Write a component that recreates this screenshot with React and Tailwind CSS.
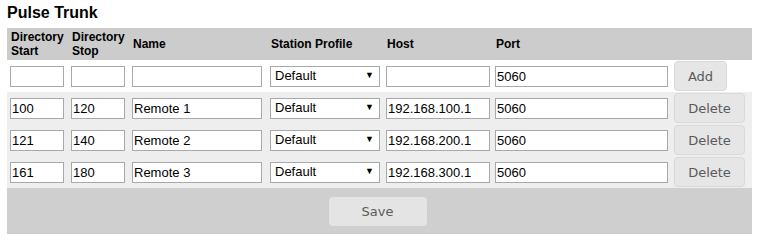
import React from "react";

const rows = [
  { start: "100", stop: "120", name: "Remote 1", host: "192.168.100.1", port: "5060" },
  { start: "121", stop: "140", name: "Remote 2", host: "192.168.200.1", port: "5060" },
  { start: "161", stop: "180", name: "Remote 3", host: "192.168.300.1", port: "5060" },
];

const cols = "grid grid-cols-[61px_61px_138px_116px_109px_179px_1fr] items-center pl-[3px]";

function Field({ value, w }) {
  return (
    <div
      className={`${w} h-[21px] border border-[#a9a9a9] bg-white pl-[1px] text-[13px] leading-[19px] text-black`}
    >
      {value}
    </div>
  );
}

function Select() {
  return (
    <div className="w-[110px] h-[21px] border border-[#a9a9a9] bg-white pl-[4px] pr-[5px] flex items-center justify-between text-[13px] text-black">
      <span>Default</span>
      <span className="text-[9px]">▼</span>
    </div>
  );
}

function Btn({ label, w }) {
  return (
    <button
      className={`${w} h-[30px] pt-[2px] rounded-[4px] border border-[#d9d9d9] bg-[#e6e6e6] text-[#5a5a5a] text-[13px] font-['DejaVu_Sans',Verdana,sans-serif]`}
    >
      {label}
    </button>
  );
}

export default function App() {
  return (
    <div className="w-[763px] h-[242px] bg-white font-['Liberation_Sans',Arial,sans-serif] pt-[3px] pl-[7px]">
      <h1 className="text-[16px] leading-[19px] font-bold text-black">Pulse Trunk</h1>
      <div className="w-[745px] mt-[6px]">
        {/* Header */}
        <div className={`${cols} h-[32px] bg-[#cccccc] text-[12px] font-bold leading-[14px] text-black`}>
          <div className="pl-[1px]">Directory<br />Start</div>
          <div className="pl-[1px]">Directory<br />Stop</div>
          <div className="pl-[1px]">Name</div>
          <div className="pl-[1px]">Station Profile</div>
          <div className="pl-[1px]">Host</div>
          <div className="pl-[1px]">Port</div>
          <div></div>
        </div>

        {/* Add row */}
        <div className={`${cols} h-[32px] bg-white`}>
          <Field value="" w="w-[54px]" />
          <Field value="" w="w-[54px]" />
          <Field value="" w="w-[130px]" />
          <Select />
          <Field value="" w="w-[104px]" />
          <Field value="5060" w="w-[173px]" />
          <Btn label="Add" w="w-[53px]" />
        </div>

        {/* Existing rows */}
        <div className="bg-[#eeeeee]">
          {rows.map((r) => (
            <div key={r.start} className={`${cols} h-[32px]`}>
              <Field value={r.start} w="w-[54px]" />
              <Field value={r.stop} w="w-[54px]" />
              <Field value={r.name} w="w-[130px]" />
              <Select />
              <Field value={r.host} w="w-[104px]" />
              <Field value={r.port} w="w-[173px]" />
              <Btn label="Delete" w="w-[71px]" />
            </div>
          ))}
        </div>

        {/* Footer */}
        <div className="h-[46px] bg-[#d0cfd0] flex items-center justify-center pr-[4px]">
          <button className="w-[98px] h-[29px] pt-[2px] rounded-[4px] bg-[#e4e4e4] text-[#5a5a5a] text-[13px] font-['DejaVu_Sans',Verdana,sans-serif]">
            Save
          </button>
        </div>
      </div>
    </div>
  );
}
